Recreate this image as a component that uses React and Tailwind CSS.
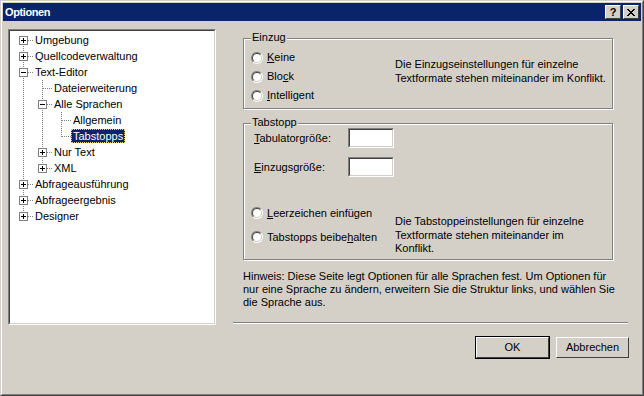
import React from "react";

const nodes = [
    { label: "Umgebung", rails: [], kids: true, open: false, last: false },
    { label: "Quellcodeverwaltung", rails: [], kids: true, open: false, last: false },
    { label: "Text-Editor", rails: [], kids: true, open: true, last: false },
    { label: "Dateierweiterung", rails: [true], kids: false, last: false },
    { label: "Alle Sprachen", rails: [true], kids: true, open: true, last: false },
    { label: "Allgemein", rails: [true, true], kids: false, last: false },
    { label: "Tabstopps", rails: [true, true], kids: false, last: true, selected: true },
    { label: "Nur Text", rails: [true], kids: true, open: false, last: false },
    { label: "XML", rails: [true], kids: true, open: false, last: true },
    { label: "Abfrageausführung", rails: [], kids: true, open: false, last: false },
    { label: "Abfrageergebnis", rails: [], kids: true, open: false, last: false },
    { label: "Designer", rails: [], kids: true, open: false, last: true },
];

function TreeRow({ node, first }) {
    return (
        <div className="flex h-[16px] items-center">
            {node.rails.map((on, i) => (
                <svg key={i} width="19" height="16" className="shrink-0" shapeRendering="crispEdges">
                    {on && <line x1="9.5" y1="0" x2="9.5" y2="16" stroke="#808080" strokeDasharray="1 1" />}
                </svg>
            ))}
            <svg width="19" height="16" className="shrink-0" shapeRendering="crispEdges">
                <line x1="9.5" y1={first ? 8 : 0} x2="9.5" y2={node.last ? 9 : 16} stroke="#808080" strokeDasharray="1 1" />
                <line x1="10" y1="8.5" x2="19" y2="8.5" stroke="#808080" strokeDasharray="1 1" />
                {node.kids && (
                    <g>
                        <rect x="5.5" y="4.5" width="8" height="8" fill="#fff" stroke="#808080" />
                        <line x1="7" y1="8.5" x2="12" y2="8.5" stroke="#000" />
                        {!node.open && <line x1="9.5" y1="6" x2="9.5" y2="11" stroke="#000" />}
                    </g>
                )}
            </svg>
            <span
                className={
                    node.selected
                        ? "whitespace-nowrap border border-dotted border-[#e0d080] bg-[#0a246a] px-[1px] leading-[12px] text-white"
                        : "whitespace-nowrap px-[2px] leading-[13px]"
                }
            >
                {node.label}
            </span>
        </div>
    );
}

function Radio({ children }) {
    return (
        <div className="flex items-center gap-[4px]">
            <div className="h-[12px] w-[12px] rounded-full border border-t-[#808080] border-l-[#808080] border-b-white border-r-white">
                <div className="h-full w-full rounded-full border border-t-[#404040] border-l-[#404040] border-b-[#d4d0c8] border-r-[#d4d0c8] bg-white" />
            </div>
            <span>{children}</span>
        </div>
    );
}

function Edit() {
    return (
        <div className="h-[20px] w-[46px] border border-t-[#808080] border-l-[#808080] border-b-white border-r-white">
            <div className="h-full w-full border border-t-[#404040] border-l-[#404040] border-b-[#d4d0c8] border-r-[#d4d0c8] bg-white" />
        </div>
    );
}

function Group({ title, className, children }) {
    return (
        <div className={"relative ml-[10px] w-[370px] border border-[#808080] shadow-[inset_1px_1px_0_#fff,1px_1px_0_#fff] " + className}>
            <span className="absolute left-[7px] top-[-8px] bg-[#d4d0c8] px-[1px] leading-[13px]">{title}</span>
            {children}
        </div>
    );
}

function Button({ children, isDefault }) {
    return (
        <div className={"h-[23px] w-[75px] border " + (isDefault ? "border-black" : "border-transparent")}>
            <div className="flex h-full w-full items-center justify-center border border-t-white border-l-white border-b-[#404040] border-r-[#404040]">
                {children}
            </div>
        </div>
    );
}

export default function App() {
    return (
        <div className="h-[396px] w-[644px] border border-t-[#d4d0c8] border-l-[#d4d0c8] border-b-[#404040] border-r-[#404040] bg-[#d4d0c8] font-['Liberation_Sans',Arial,sans-serif] text-[11px] text-black">
            <div className="h-full w-full border border-t-white border-l-white border-b-[#808080] border-r-[#808080] p-[1px]">
                {/* title bar */}
                <div className="flex h-[18px] items-center justify-between bg-[#0a246a] pl-[2px] pr-[2px]">
                    <span className="text-[11px] font-bold tracking-[-0.4px] text-white">Optionen</span>
                    <div className="flex gap-[2px]">
                        <div className="flex h-[14px] w-[16px] items-center justify-center border border-t-white border-l-white border-b-[#404040] border-r-[#404040] bg-[#d4d0c8] text-[11px] font-bold leading-none">
                            ?
                        </div>
                        <div className="flex h-[14px] w-[16px] items-center justify-center border border-t-white border-l-white border-b-[#404040] border-r-[#404040] bg-[#d4d0c8]">
                            <svg width="8" height="7" shapeRendering="crispEdges">
                                <path d="M0 0h2l2 2.5L6 0h2L5 3.5 8 7H6L4 4.5 2 7H0l3-3.5z" fill="#000" />
                            </svg>
                        </div>
                    </div>
                </div>

                <div className="flex pl-[5px] pt-[8px]">
                    {/* tree */}
                    <div className="h-[296px] w-[208px] shrink-0 border border-t-[#808080] border-l-[#808080] border-b-white border-r-white">
                        <div className="h-full w-full border border-t-[#404040] border-l-[#404040] border-b-[#d4d0c8] border-r-[#d4d0c8] bg-white pl-[4px] pt-[1px]">
                            {nodes.map((n, i) => (
                                <TreeRow key={n.label} node={n} first={i === 0} />
                            ))}
                        </div>
                    </div>

                    {/* right panel */}
                    <div className="ml-[17px] flex h-[296px] w-[395px] flex-col pt-[9px]">
                        <Group title="Einzug" className="flex h-[71px]">
                            <div className="flex w-[151px] flex-col pl-[7px] pt-[9px]">
                                <div className="flex h-[19px] items-center"><Radio><u>K</u>eine</Radio></div>
                                <div className="flex h-[19px] items-center"><Radio>Blo<u>c</u>k</Radio></div>
                                <div className="flex h-[19px] items-center"><Radio><u>I</u>ntelligent</Radio></div>
                            </div>
                            <div className="whitespace-nowrap pt-[18px] leading-[14px]">
                                Die Einzugseinstellungen für einzelne
                                <br />
                                Textformate stehen miteinander im Konflikt.
                            </div>
                        </Group>

                        <Group title="Tabstopp" className="mt-[14px] h-[137px]">
                            <div className="pl-[10px] pt-[4px]">
                                <div className="flex items-center">
                                    <span className="w-[94px]"><u>T</u>abulatorgröße:</span>
                                    <Edit />
                                </div>
                                <div className="mt-[9px] flex items-center">
                                    <span className="w-[94px]"><u>E</u>inzugsgröße:</span>
                                    <Edit />
                                </div>
                            </div>
                            <div className="mt-[26px] flex">
                                <div className="flex w-[151px] flex-col gap-[4px] pl-[7px]">
                                    <div className="flex h-[20px] items-center"><Radio><u>L</u>eerzeichen einfügen</Radio></div>
                                    <div className="flex h-[20px] items-center"><Radio>Tabstopps beibe<u>h</u>alten</Radio></div>
                                </div>
                                <div className="whitespace-nowrap pt-[12px] leading-[13.5px]">
                                    Die Tabstoppeinstellungen für einzelne
                                    <br />
                                    Textformate stehen miteinander im
                                    <br />
                                    Konflikt.
                                </div>
                            </div>
                        </Group>

                        <div className="ml-[10px] mt-[10px] whitespace-nowrap leading-[13px]">
                            Hinweis: Diese Seite legt Optionen für alle Sprachen fest. Um Optionen für
                            <br />
                            nur eine Sprache zu ändern, erweitern Sie die Struktur links, und wählen Sie
                            <br />
                            die Sprache aus.
                        </div>

                        <div className="mt-auto mb-[1px] h-[2px] border-t border-t-[#808080] border-b border-b-white" />
                    </div>
                </div>

                <div className="mt-[11px] flex justify-end gap-[5px] pr-[11px]">
                    <Button isDefault>OK</Button>
                    <Button>Abbrechen</Button>
                </div>
            </div>
        </div>
    );
}
